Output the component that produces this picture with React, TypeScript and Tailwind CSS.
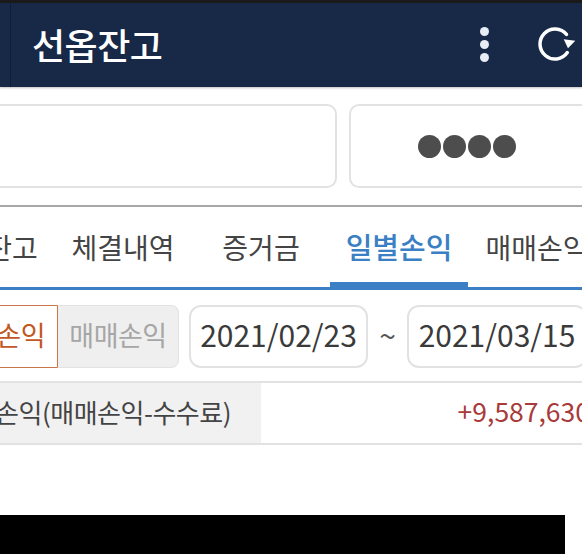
import React from 'react';

const font = { fontFamily: '"Noto Sans CJK KR", "Noto Sans", sans-serif' };

function RefreshIcon() {
  return (
    <svg width="40" height="40" viewBox="0 0 40 40" fill="none">
      <path d="M30.3 28.6A15 15 0 1 1 29.5 10.4" stroke="white" strokeWidth="3.5" strokeLinecap="round" />
      <path d="M26.7 15.3L38.3 16.7L31 24.3z" fill="white" />
    </svg>
  );
}

function Tab({ label, active, className }: { label: string; active?: boolean; className: string }) {
  return (
    <div
      className={`shrink-0 h-full flex items-center justify-center ${className} ${
        active
          ? 'text-[29px] text-[#3b7fc4] font-medium border-b-[5px] border-[#3b7fc4] pt-[5px]'
          : 'text-[28px] text-[#444444]'
      }`}
    >
      {label}
    </div>
  );
}

export default function App() {
  return (
    <div className="w-[582px] h-[554px] overflow-hidden bg-white flex flex-col" style={font}>
      {/* Header */}
      <div className="shrink-0 h-[87px] bg-[#172947] border-t-[3px] border-[#1a1a1a] flex items-center shadow-[0_1px_2px_rgba(0,0,0,0.25)]">
        <div className="w-[11px] h-full border-r border-[#0f1d36]" />
        <h1 className="ml-[21px] mb-[2px] text-[36px] leading-none font-medium text-white tracking-[-0.5px]">선옵잔고</h1>
        <div className="ml-auto mr-[5px] mb-[2px] flex items-center gap-[48px]">
          <div className="flex flex-col gap-[4px]">
            <span className="w-[9px] h-[9px] rounded-full bg-[#e8ecf4]" />
            <span className="w-[9px] h-[9px] rounded-full bg-[#e8ecf4]" />
            <span className="w-[9px] h-[9px] rounded-full bg-[#e8ecf4]" />
          </div>
          <RefreshIcon />
        </div>
      </div>

      {/* Account / password */}
      <div className="shrink-0 mt-[17px] h-[84px] flex gap-[12px] ml-[-10px]">
        <div className="w-[347px] shrink-0 h-full bg-white border-2 border-[#e2e2e2] rounded-[10px]" />
        <div className="w-[250px] shrink-0 h-full bg-white border-2 border-[#e2e2e2] rounded-[10px] flex items-center pl-[67px] gap-[2px]">
          <span className="w-[23px] h-[23px] rounded-full bg-[#4d4d4d]" />
          <span className="w-[23px] h-[23px] rounded-full bg-[#4d4d4d]" />
          <span className="w-[23px] h-[23px] rounded-full bg-[#4d4d4d]" />
          <span className="w-[23px] h-[23px] rounded-full bg-[#4d4d4d]" />
        </div>
      </div>

      {/* Tabs */}
      <div className="shrink-0 mt-[17px] h-[85px] border-t-2 border-b-[3px] border-t-[#a8a8a8] border-b-[#3b7fc4] flex ml-[-60px]">
        <Tab label="잔고" className="w-[104px] pl-[40px]" />
        <Tab label="체결내역" className="w-[134px] ml-[12px]" />
        <Tab label="증거금" className="w-[114px] ml-[14px]" />
        <Tab label="일별손익" active className="w-[138px] ml-[12px] mb-[-3px] h-[83px]" />
        <Tab label="매매손익" className="w-[120px] ml-[9px]" />
      </div>

      {/* Filter row */}
      <div className="shrink-0 mt-[15px] h-[63px] flex items-center ml-[-60px]">
        <div className="w-[118px] shrink-0 h-full bg-white border border-[#c8764a] rounded-l-[8px] flex items-center justify-end pr-[12px] pb-[3px] text-[27px] text-[#c2571f] tracking-[-0.5px]">
          일별손익
        </div>
        <div className="w-[121px] shrink-0 h-full bg-[#efefef] border border-[#e2e2e2] border-l-0 rounded-r-[8px] flex items-center justify-center pb-[3px] text-[27px] text-[#a6a6a6] tracking-[-0.5px]">
          매매손익
        </div>
        <div className="ml-[10px] w-[179px] shrink-0 h-full bg-white border-2 border-[#e2e2e2] rounded-[12px] flex items-center justify-center pb-[5px] text-[30px] text-[#3a3a3a]">
          2021/02/23
        </div>
        <div className="w-[39px] shrink-0 text-center text-[30px] leading-none pb-[5px] text-[#555555]">~</div>
        <div className="w-[180px] shrink-0 h-full bg-white border-2 border-[#e2e2e2] rounded-[12px] flex items-center justify-center pb-[5px] text-[30px] text-[#3a3a3a]">
          2021/03/15
        </div>
      </div>

      {/* Summary row */}
      <div className="shrink-0 mt-[13px] h-[64px] border-y-2 border-[#e2e2e2] flex ml-[-100px] w-[690px]">
        <div className="w-[361px] h-full bg-[#f1f1f1] flex items-center justify-end pr-[30px] pb-[4px] text-[26px] text-[#444444] tracking-[-0.5px]">
          실현손익(매매손익-수수료)
        </div>
        <div className="flex-1 flex items-center justify-end pb-[4px] text-[26.5px] text-[#a83a3a]">+9,587,630</div>
      </div>

      {/* Bottom bar */}
      <div className="shrink-0 mt-[70px] w-[565px] h-[60px] bg-black" />
    </div>
  );
}
